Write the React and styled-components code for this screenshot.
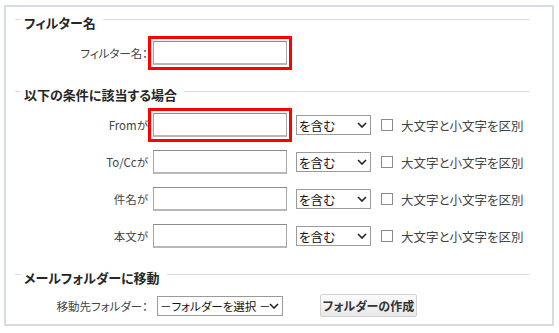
import React from 'react';
import styled, { createGlobalStyle } from 'styled-components';

const GlobalStyle = createGlobalStyle`
  body {
    margin: 0;
    background: #fff;
    font-family: "Noto Sans CJK JP", "Noto Sans", sans-serif;
    font-feature-settings: "palt";
  }
`;

const Panel = styled.div`
  box-sizing: border-box;
  width: 550px;
  height: 321px;
  margin: 5px 0 0 4px;
  padding: 0 22px 0 9px;
  border: 2px solid #d6dbe6;
  background: #fff;
`;

const Section = styled.section`
  margin-top: ${({ $first }) => ($first ? 6 : 20)}px;
`;

const Heading = styled.div`
  display: flex;
  align-items: center;
  height: 20px;
  margin-bottom: 8px;
`;

const Rule = styled.div`
  height: 1px;
  margin-bottom: 8px;
  background: #dcdcdc;
  flex: ${({ $short }) => ($short ? '0 0 6px' : '1 1 auto')};
`;

const HeadingText = styled.h3`
  margin: 0 7px 0 3px;
  font-size: 13px;
  font-weight: bold;
  line-height: 20px;
  color: #262626;
  white-space: nowrap;
`;

const Rows = styled.div`
  display: flex;
  flex-direction: column;
  gap: 13px;
`;

const Row = styled.div`
  display: flex;
  align-items: center;
  height: ${({ $tall }) => ($tall ? 23 : 24)}px;
  margin-top: ${({ $offset }) => $offset || 0}px;
`;

const Label = styled.label`
  flex: 0 0 133px;
  margin-right: 5px;
  text-align: right;
  font-size: 11.5px;
  color: #444;
  white-space: nowrap;
`;

const TextInput = styled.input`
  box-sizing: border-box;
  width: 134px;
  height: 24px;
  margin: 0;
  padding: 0 4px;
  border: 1px solid #a5a5a5;
  border-top-color: #8c8c8c;
  border-bottom: 2px solid #b8b8b8;
  background: #fff;
  outline: ${({ $highlight }) => ($highlight ? '3px solid #f00' : 'none')};
  outline-offset: 2px;
`;

const SelectWrap = styled.span`
  position: relative;
  display: inline-flex;
  margin-left: ${({ $gap }) => $gap}px;
`;

const Select = styled.select`
  box-sizing: border-box;
  appearance: none;
  width: ${({ $w }) => $w}px;
  height: 20px;
  margin: 0;
  padding: 0 12px 0 2px;
  border: 1px solid #9a9a9a;
  border-radius: 0;
  background: #fff;
  font-family: "Noto Sans CJK JP", sans-serif;
  font-feature-settings: "palt";
  font-size: ${({ $fs }) => $fs}px;
  color: #111;
`;

const Chevron = styled.svg`
  position: absolute;
  right: 4px;
  top: 7px;
  pointer-events: none;
`;

const Check = styled.input`
  appearance: none;
  box-sizing: border-box;
  width: 12px;
  height: 12px;
  margin: 0 8px 0 10px;
  border: 1px solid #8a8a8a;
  background: #fff;
`;

const CheckText = styled.span`
  font-size: 12.5px;
  color: #444;
  white-space: nowrap;
`;

const Button = styled.button`
  box-sizing: border-box;
  width: 97px;
  height: 23px;
  margin-left: 37px;
  padding: 0;
  border: 1px solid #d2d2d2;
  border-radius: 2px;
  background: linear-gradient(#fbfbfb, #e9e9e9);
  font-family: "Noto Sans CJK JP", sans-serif;
  font-feature-settings: "palt";
  font-size: 12px;
  font-weight: bold;
  color: #333;
`;

function Dropdown({ value, width, gap, fontSize = 12.5 }) {
  return (
    <SelectWrap $gap={gap}>
      <Select $w={width} $fs={fontSize} defaultValue={value}>
        <option>{value}</option>
      </Select>
      <Chevron width="10" height="6" viewBox="0 0 10 6">
        <path d="M1 1 L5 5 L9 1" fill="none" stroke="#222" strokeWidth="1.6" />
      </Chevron>
    </SelectWrap>
  );
}

function SectionHeading({ children }) {
  return (
    <Heading>
      <Rule $short />
      <HeadingText>{children}</HeadingText>
      <Rule />
    </Heading>
  );
}

const conditions = [
  { label: 'Fromが', highlight: true },
  { label: 'To/Ccが' },
  { label: '件名が' },
  { label: '本文が' },
];

export default function App() {
  return (
    <>
      <GlobalStyle />
      <Panel>
        <Section $first>
          <SectionHeading>フィルター名</SectionHeading>
          <Row>
            <Label>フィルター名：</Label>
            <TextInput $highlight />
          </Row>
        </Section>

        <Section>
          <SectionHeading>以下の条件に該当する場合</SectionHeading>
          <Rows>
            {conditions.map((c) => (
              <Row key={c.label}>
                <Label>{c.label}</Label>
                <TextInput $highlight={c.highlight} />
                <Dropdown value="を含む" width={75} gap={9} />
                <Check type="checkbox" />
                <CheckText>大文字と小文字を区別</CheckText>
              </Row>
            ))}
          </Rows>
        </Section>

        <Section>
          <SectionHeading>メールフォルダーに移動</SectionHeading>
          <Row $tall $offset={-2}>
            <Label>移動先フォルダー：</Label>
            <Dropdown value="－フォルダーを選択 －" width={126} gap={4} fontSize={11.5} />
            <Button type="button">フォルダーの作成</Button>
          </Row>
        </Section>
      </Panel>
    </>
  );
}
